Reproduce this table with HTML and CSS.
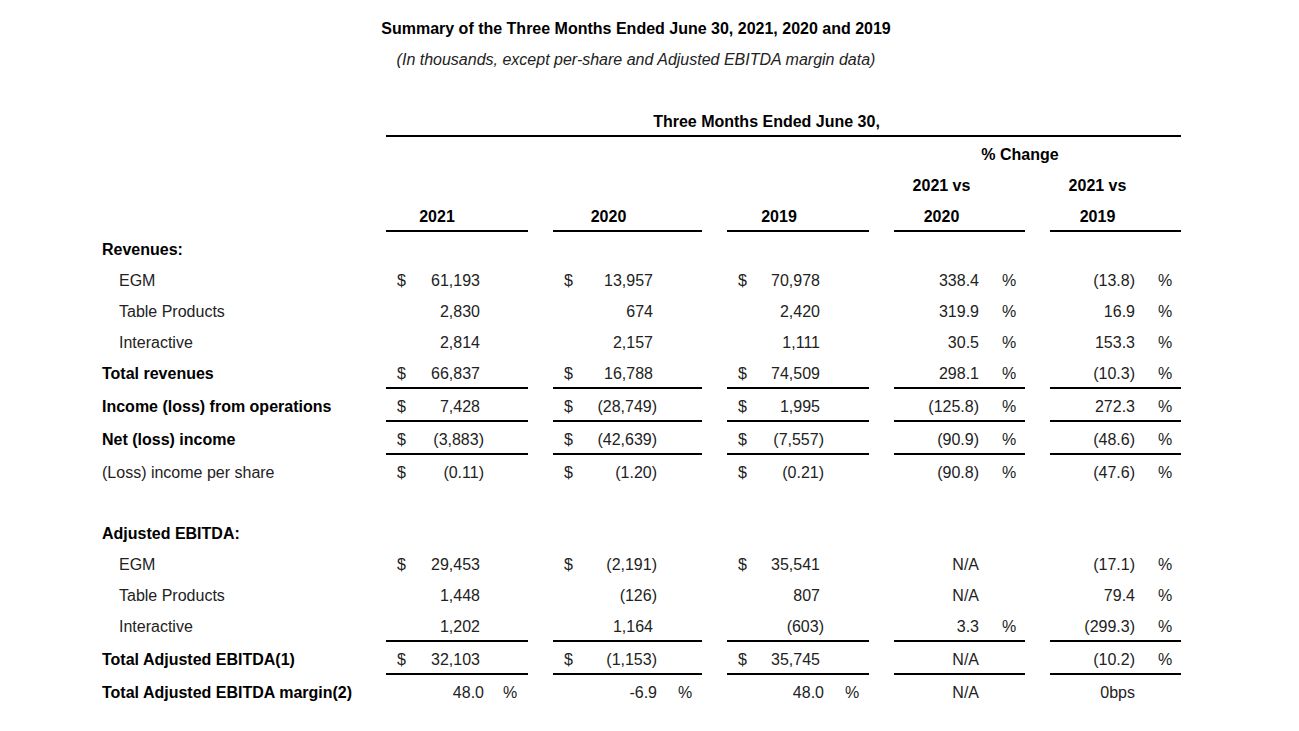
FILE: index.html
```html
<!DOCTYPE html>
<html lang="en">
<head>
<meta charset="utf-8">
<title>Summary of the Three Months Ended June 30, 2021, 2020 and 2019</title>
<link rel="stylesheet" href="styles.css">
</head>
<body>
<div class="page">
  <div class="row"><div class="title">Summary of the Three Months Ended June 30, 2021, 2020 and 2019</div></div>
  <div class="row"><div class="title sub">(In thousands, except per-share and Adjusted EBITDA margin data)</div></div>
  <div class="row"><div class="blank"></div></div>

  <div class="row"><div></div><div class="hc span-all line">Three Months Ended June 30,</div></div>
  <div class="row"><div></div><div></div><div></div><div></div><div class="hc span-chg">% Change</div></div>
  <div class="row"><div></div><div></div><div></div><div></div><div class="hc c1">2021 vs</div><div class="hc c2">2021 vs</div></div>
  <div class="row"><div></div><div class="hc y1 line">2021</div><div class="hc y2 line">2020</div><div class="hc y3 line">2019</div><div class="hc c1 line">2020</div><div class="hc c2 line">2019</div></div>

  <div class="row"><div class="lbl b">Revenues:</div></div>
  <div class="row">
    <div class="lbl ind">EGM</div>
    <div class="cell y1"><span class="cur">$</span><span class="num">61,193</span><span class="pct"></span></div>
    <div class="cell y2"><span class="cur">$</span><span class="num">13,957</span><span class="pct"></span></div>
    <div class="cell y3"><span class="cur">$</span><span class="num">70,978</span><span class="pct"></span></div>
    <div class="cell c1"><span class="num">338.4</span><span class="pct">%</span></div>
    <div class="cell c2"><span class="num">(13.8)</span><span class="pct">%</span></div>
  </div>
  <div class="row">
    <div class="lbl ind">Table Products</div>
    <div class="cell y1"><span class="num">2,830</span><span class="pct"></span></div>
    <div class="cell y2"><span class="num">674</span><span class="pct"></span></div>
    <div class="cell y3"><span class="num">2,420</span><span class="pct"></span></div>
    <div class="cell c1"><span class="num">319.9</span><span class="pct">%</span></div>
    <div class="cell c2"><span class="num">16.9</span><span class="pct">%</span></div>
  </div>
  <div class="row">
    <div class="lbl ind">Interactive</div>
    <div class="cell y1"><span class="num">2,814</span><span class="pct"></span></div>
    <div class="cell y2"><span class="num">2,157</span><span class="pct"></span></div>
    <div class="cell y3"><span class="num">1,111</span><span class="pct"></span></div>
    <div class="cell c1"><span class="num">30.5</span><span class="pct">%</span></div>
    <div class="cell c2"><span class="num">153.3</span><span class="pct">%</span></div>
  </div>
  <div class="row">
    <div class="lbl b">Total revenues</div>
    <div class="cell y1 line"><span class="cur">$</span><span class="num">66,837</span><span class="pct"></span></div>
    <div class="cell y2 line"><span class="cur">$</span><span class="num">16,788</span><span class="pct"></span></div>
    <div class="cell y3 line"><span class="cur">$</span><span class="num">74,509</span><span class="pct"></span></div>
    <div class="cell c1 line"><span class="num">298.1</span><span class="pct">%</span></div>
    <div class="cell c2 line"><span class="num">(10.3)</span><span class="pct">%</span></div>
  </div>
  <div class="row">
    <div class="lbl b">Income (loss) from operations</div>
    <div class="cell y1 line"><span class="cur">$</span><span class="num">7,428</span><span class="pct"></span></div>
    <div class="cell y2 line neg"><span class="cur">$</span><span class="num">(28,749)</span><span class="pct"></span></div>
    <div class="cell y3 line"><span class="cur">$</span><span class="num">1,995</span><span class="pct"></span></div>
    <div class="cell c1 line"><span class="num">(125.8)</span><span class="pct">%</span></div>
    <div class="cell c2 line"><span class="num">272.3</span><span class="pct">%</span></div>
  </div>
  <div class="row">
    <div class="lbl b">Net (loss) income</div>
    <div class="cell y1 line neg"><span class="cur">$</span><span class="num">(3,883)</span><span class="pct"></span></div>
    <div class="cell y2 line neg"><span class="cur">$</span><span class="num">(42,639)</span><span class="pct"></span></div>
    <div class="cell y3 line neg"><span class="cur">$</span><span class="num">(7,557)</span><span class="pct"></span></div>
    <div class="cell c1 line"><span class="num">(90.9)</span><span class="pct">%</span></div>
    <div class="cell c2 line"><span class="num">(48.6)</span><span class="pct">%</span></div>
  </div>
  <div class="row">
    <div class="lbl">(Loss) income per share</div>
    <div class="cell y1 neg"><span class="cur">$</span><span class="num">(0.11)</span><span class="pct"></span></div>
    <div class="cell y2 neg"><span class="cur">$</span><span class="num">(1.20)</span><span class="pct"></span></div>
    <div class="cell y3 neg"><span class="cur">$</span><span class="num">(0.21)</span><span class="pct"></span></div>
    <div class="cell c1"><span class="num">(90.8)</span><span class="pct">%</span></div>
    <div class="cell c2"><span class="num">(47.6)</span><span class="pct">%</span></div>
  </div>
  <div class="row"><div class="blank short"></div></div>

  <div class="row"><div class="lbl b">Adjusted EBITDA:</div></div>
  <div class="row">
    <div class="lbl ind">EGM</div>
    <div class="cell y1"><span class="cur">$</span><span class="num">29,453</span><span class="pct"></span></div>
    <div class="cell y2 neg"><span class="cur">$</span><span class="num">(2,191)</span><span class="pct"></span></div>
    <div class="cell y3"><span class="cur">$</span><span class="num">35,541</span><span class="pct"></span></div>
    <div class="cell c1"><span class="num">N/A</span><span class="pct"></span></div>
    <div class="cell c2"><span class="num">(17.1)</span><span class="pct">%</span></div>
  </div>
  <div class="row">
    <div class="lbl ind">Table Products</div>
    <div class="cell y1"><span class="num">1,448</span><span class="pct"></span></div>
    <div class="cell y2 neg"><span class="num">(126)</span><span class="pct"></span></div>
    <div class="cell y3"><span class="num">807</span><span class="pct"></span></div>
    <div class="cell c1"><span class="num">N/A</span><span class="pct"></span></div>
    <div class="cell c2"><span class="num">79.4</span><span class="pct">%</span></div>
  </div>
  <div class="row">
    <div class="lbl ind">Interactive</div>
    <div class="cell y1 line"><span class="num">1,202</span><span class="pct"></span></div>
    <div class="cell y2 line"><span class="num">1,164</span><span class="pct"></span></div>
    <div class="cell y3 line neg"><span class="num">(603)</span><span class="pct"></span></div>
    <div class="cell c1 line"><span class="num">3.3</span><span class="pct">%</span></div>
    <div class="cell c2 line"><span class="num">(299.3)</span><span class="pct">%</span></div>
  </div>
  <div class="row">
    <div class="lbl b">Total Adjusted EBITDA(1)</div>
    <div class="cell y1 line"><span class="cur">$</span><span class="num">32,103</span><span class="pct"></span></div>
    <div class="cell y2 line neg"><span class="cur">$</span><span class="num">(1,153)</span><span class="pct"></span></div>
    <div class="cell y3 line"><span class="cur">$</span><span class="num">35,745</span><span class="pct"></span></div>
    <div class="cell c1 line"><span class="num">N/A</span><span class="pct"></span></div>
    <div class="cell c2 line"><span class="num">(10.2)</span><span class="pct">%</span></div>
  </div>
  <div class="row">
    <div class="lbl b">Total Adjusted EBITDA margin(2)</div>
    <div class="cell y1 neg"><span class="num">48.0</span><span class="pct">%</span></div>
    <div class="cell y2 neg"><span class="num">-6.9</span><span class="pct">%</span></div>
    <div class="cell y3 neg"><span class="num">48.0</span><span class="pct">%</span></div>
    <div class="cell c1"><span class="num">N/A</span><span class="pct"></span></div>
    <div class="cell c2"><span class="num">0bps</span><span class="pct"></span></div>
  </div>
</div>
</body>
</html>
```

FILE: styles.css
```css
html, body {
  margin: 0;
  padding: 0;
  background: #ffffff;
}

body {
  font-family: "Liberation Sans", Arial, sans-serif;
  font-size: 16px;
  color: #222222;
}

.page {
  padding: 11px 0 0 100px;
}

.row {
  display: grid;
  grid-template-columns: 261px 142px 149px 142px 131px 131px;
  column-gap: 25px;
  width: 1081px;
}

.row > div {
  padding-top: 4px;
  line-height: 27px;
  min-height: 27px;
  white-space: nowrap;
}

.title {
  grid-column: 1 / -1;
  text-align: center;
  padding-right: 9px;
  font-weight: bold;
  color: #000000;
}

.title.sub {
  font-weight: normal;
  font-style: italic;
  color: #222222;
}

.lbl {
  padding-left: 2px;
}

.lbl.ind {
  padding-left: 19px;
}

.b {
  font-weight: bold;
  color: #000000;
}

.line {
  border-bottom: 2px solid #000000;
}

.hc {
  text-align: center;
  font-weight: bold;
  color: #000000;
}

.hc.span-all {
  grid-column: 2 / -1;
  padding-right: 34px;
}

.hc.span-chg {
  grid-column: 5 / -1;
  padding-right: 35px;
}

.hc.y1 { padding-right: 40px; }
.hc.y2 { padding-right: 38px; }
.hc.y3 { padding-right: 38px; }
.hc.c1 { grid-column: 5; padding-right: 36px; }
.hc.c2 { grid-column: 6; padding-right: 36px; }

.cell {
  display: flex;
  padding-left: 11px;
}

.cell .num {
  flex: 1;
  text-align: right;
}

.cell .pct {
  width: 49px;
  padding-left: 25px;
  box-sizing: border-box;
}

.cell.y1 .pct {
  width: 48px;
  padding-left: 23px;
}

.cell.c1 .pct,
.cell.c2 .pct {
  width: 45px;
  padding-left: 22px;
}

.cell.c1 .num,
.cell.c2 .num {
  margin-right: 1px;
}

.cell.neg .num {
  margin-right: -4px;
}

.blank {
  grid-column: 1 / -1;
}

.row > .blank.short {
  min-height: 26px;
}
```
